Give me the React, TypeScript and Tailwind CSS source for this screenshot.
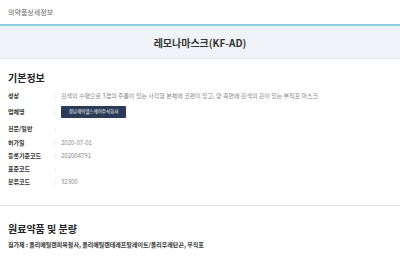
const rows: { label: string; value?: string; company?: boolean; h: string }[] = [
  {
    label: "성상",
    value: "흰색의 수평으로 3겹의 주름이 있는 사각형 본체에 코편이 있고, 양 측면에 흰색의 끈이 있는 부직포 마스크",
    h: "h-[13px]",
  },
  { label: "업체명", company: true, h: "h-[19px]" },
  { label: "전문/일반", h: "h-[15px]" },
  { label: "허가일", value: "2020-07-01", h: "h-[13px]" },
  { label: "등록기준코드", value: "202004791", h: "h-[13px]" },
  { label: "표준코드", h: "h-[13px]" },
  { label: "분류코드", value: "32300", h: "h-[13px]" },
]

export default function App() {
  return (
    <div className="w-[400px] h-[260px] overflow-hidden bg-white font-['Noto_Sans_CJK_KR','Noto_Sans',sans-serif] text-[#333]">
      <div className="h-[26px] px-2 flex items-center text-[7px] text-[#666] border-b-2 border-[#8ccfe0]">
        의약품상세정보
      </div>
      <div className="h-[33px] bg-[#f0f4f9] border-b border-[#e6eaef] flex items-center justify-center text-[10px] font-bold text-[#333]">
        레모나마스크(KF-AD)
      </div>

      <div className="px-2 pt-[12px] pb-[17px] border-b border-[#e5e5e5]">
        <h2 className="text-[10px] leading-[14px] font-semibold text-[#222] mb-[4px]">기본정보</h2>
        <div className="flex flex-col">
          {rows.map((r) => (
            <div key={r.label} className={`flex items-center ${r.h} text-[6px]`}>
              <span className="w-[47px] font-bold text-[#333]">{r.label}</span>
              <span className="w-[6px] text-[#ccc] text-[5px]">|</span>
              {r.company ? (
                <span className="h-[12px] w-[65px] bg-[#2a3a57] rounded-[1px] text-white text-[4.5px] flex items-center justify-center">
                  경남제약헬스케어주식회사
                </span>
              ) : (
                <span className="text-[#888]">{r.value}</span>
              )}
            </div>
          ))}
        </div>
      </div>

      <div className="px-2 pt-[16px]">
        <h2 className="text-[10px] leading-[14px] font-semibold text-[#222]">원료약품 및 분량</h2>
        <p className="mt-[4px] text-[6px] font-bold text-[#333]">
          첨가제 : 폴리에틸렌피복철사, 폴리에틸렌테레프탈레이트/폴리우레탄끈, 부직포
        </p>
      </div>
    </div>
  )
}
